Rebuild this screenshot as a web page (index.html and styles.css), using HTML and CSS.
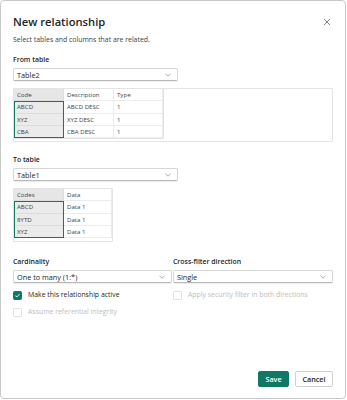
FILE: index.html
```html
<!DOCTYPE html>
<html lang="en">
<head>
<meta charset="utf-8">
<title>New relationship</title>
<link rel="stylesheet" href="styles.css">
</head>
<body>
<div class="dialog">
  <div class="header">
    <h1 class="title">New relationship</h1>
    <span class="close" aria-label="Close">
      <svg width="8" height="8" viewBox="0 0 8 8"><path d="M1 1L7 7M7 1L1 7" stroke="#616161" stroke-width="0.8" fill="none"/></svg>
    </span>
  </div>
  <p class="sub">Select tables and columns that are related.</p>

  <div class="label label-first">From table</div>
  <div class="select select-table"><span>Table2</span><svg class="chev" width="6" height="4" viewBox="0 0 6 4"><path d="M0.5 0.8L3 3.2L5.5 0.8" stroke="#8a8a8a" stroke-width="0.7" fill="none"/></svg></div>

  <div class="preview preview-wide">
    <div class="grid grid-3">
      <div class="cell key head">Code</div><div class="cell head">Description</div><div class="cell head">Type</div>
      <div class="cell key">ABCD</div><div class="cell">ABCD DESC</div><div class="cell">1</div>
      <div class="cell key">XYZ</div><div class="cell">XYZ DESC</div><div class="cell">1</div>
      <div class="cell key">CBA</div><div class="cell">CBA DESC</div><div class="cell">1</div>
      <div class="sel"></div>
    </div>
  </div>

  <div class="label label-second">To table</div>
  <div class="select select-table"><span>Table1</span><svg class="chev" width="6" height="4" viewBox="0 0 6 4"><path d="M0.5 0.8L3 3.2L5.5 0.8" stroke="#8a8a8a" stroke-width="0.7" fill="none"/></svg></div>

  <div class="preview preview-narrow">
    <div class="grid grid-2">
      <div class="cell key head">Codes</div><div class="cell head">Data</div>
      <div class="cell key">ABCD</div><div class="cell">Data 1</div>
      <div class="cell key">8YTD</div><div class="cell">Data 1</div>
      <div class="cell key">XYZ</div><div class="cell">Data 1</div>
      <div class="sel"></div>
    </div>
  </div>

  <div class="options">
    <div class="opt">
      <div class="label">Cardinality</div>
      <div class="select select-left"><span>One to many (1:*)</span><svg class="chev" width="6" height="4" viewBox="0 0 6 4"><path d="M0.5 0.8L3 3.2L5.5 0.8" stroke="#8a8a8a" stroke-width="0.7" fill="none"/></svg></div>
    </div>
    <div class="opt">
      <div class="label">Cross-filter direction</div>
      <div class="select"><span>Single</span><svg class="chev" width="6" height="4" viewBox="0 0 6 4"><path d="M0.5 0.8L3 3.2L5.5 0.8" stroke="#8a8a8a" stroke-width="0.7" fill="none"/></svg></div>
    </div>
  </div>

  <div class="checks">
    <div class="check"><span class="box box-on"><svg width="7" height="7" viewBox="0 0 7 7"><path d="M1.4 3.6L2.8 5L5.6 2" stroke="#fff" stroke-width="0.9" fill="none"/></svg></span><span>Make this relationship active</span></div>
    <div class="check disabled"><span class="box"></span><span>Apply security filter in both directions</span></div>
    <div class="check disabled"><span class="box"></span><span>Assume referential integrity</span></div>
  </div>

  <div class="footer">
    <button class="btn btn-primary">Save</button>
    <button class="btn">Cancel</button>
  </div>
</div>
</body>
</html>
```

FILE: styles.css
```css
* { box-sizing: border-box; }
html, body { margin: 0; padding: 0; background: #ffffff; }
body {
  font-family: "Open Sans", "Noto Sans", sans-serif;
  color: #242424;
}
.dialog {
  width: 346px;
  height: 399px;
  border: 1px solid #c8c8c8;
  border-radius: 4px;
  background: #fff;
  padding: 14px 12px 11px 12px;
  display: flex;
  flex-direction: column;
}
.header {
  display: flex;
  align-items: center;
  justify-content: space-between;
  height: 14px;
}
.title {
  margin: 0;
  font-size: 11.2px;
  font-weight: 600;
  line-height: 14px;
  color: #242424;
}
.close {
  display: flex;
  width: 8px;
  height: 8px;
  margin-right: 2px;
}
.sub {
  margin: 6px 0 0 0;
  font-size: 6.9px;
  line-height: 10px;
  color: #424242;
}
.label {
  font-size: 6.9px;
  font-weight: 600;
  line-height: 10px;
  color: #242424;
  margin-bottom: 3px;
}
.label-first { margin-top: 10px; }
.label-second { margin-top: 13px; }
.select {
  height: 13px;
  border: 1px solid #d6d6d6;
  border-bottom-color: #b8b8b8;
  border-radius: 2px;
  display: flex;
  align-items: center;
  justify-content: space-between;
  padding: 0 6px 0 3px;
  font-size: 7.3px;
  color: #242424;
  box-shadow: 0 0.5px 1px rgba(0,0,0,0.08);
}
.select-table { width: 165px; }
.select-left { width: 159px; }
.chev { display: block; }
.preview {
  margin-top: 7px;
  border: 1px solid #e3e3e3;
  border-radius: 1px;
  height: 54px;
  padding-bottom: 4px;
}
.preview-wide { width: 320px; }
.preview-narrow { width: 100px; }
.grid {
  display: grid;
  grid-auto-rows: 12.25px;
  position: relative;
}
.grid-3 { grid-template-columns: 50px 50px 49px; width: 150px; border-right: 1px solid #e3e3e3; border-bottom: 1px solid #e3e3e3; }
.grid-2 { grid-template-columns: 50px 48px; width: 98px; }
.cell {
  font-size: 6.1px;
  line-height: 12px;
  color: #424242;
  padding-left: 3px;
  border-right: 1px solid #ebebeb;
  border-bottom: 1px solid #ebebeb;
  white-space: nowrap;
  overflow: hidden;
}
.cell.key { background: #ebebeb; border-right-color: #dcdcdc; border-bottom-color: #dcdcdc; }
.cell.head.key { background: #e6e6e6; }
.sel {
  position: absolute;
  left: 0;
  top: 12.25px;
  width: 50px;
  height: 37px;
  border: 1.3px solid #117865;
  pointer-events: none;
}
.options {
  margin-top: 15px;
  display: grid;
  grid-template-columns: 160px 160px;
}
.checks {
  margin-top: 7px;
  display: grid;
  grid-template-columns: 160px 160px;
  row-gap: 7px;
}
.check {
  display: flex;
  align-items: center;
  gap: 6px;
  font-size: 6.9px;
  line-height: 10px;
  color: #242424;
}
.check.disabled { color: #bdbdbd; }
.box {
  width: 9px;
  height: 9px;
  border: 1px solid #e0e0e0;
  border-radius: 1.5px;
  display: flex;
  align-items: center;
  justify-content: center;
  flex: none;
}
.box-on { background: #117865; border-color: #117865; }
.footer {
  margin-top: auto;
  display: flex;
  justify-content: flex-end;
  gap: 6px;
  padding-right: 0;
}
.btn {
  height: 16px;
  min-width: 31px;
  padding: 0 6px;
  border: 1px solid #d1d1d1;
  border-radius: 2px;
  background: #fff;
  font-family: "Open Sans", "Noto Sans", sans-serif;
  font-size: 7.2px;
  font-weight: 600;
  color: #242424;
  line-height: 14px;
}
.btn-primary {
  background: #117865;
  border-color: #117865;
  color: #fff;
}
.btn:last-child { width: 38px; }
```
